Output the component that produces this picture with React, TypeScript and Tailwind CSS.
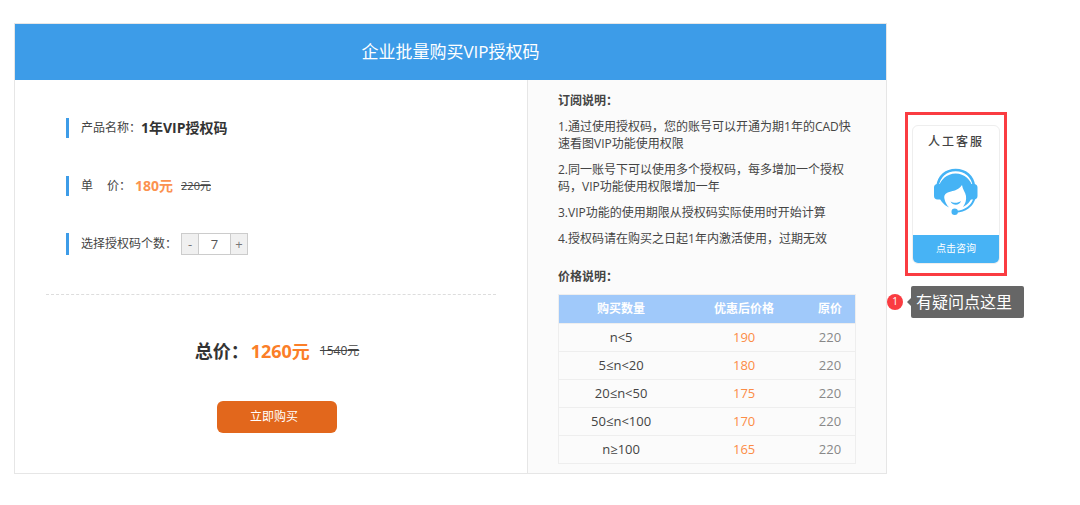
import { useState } from "react";

const tiers = [
  { range: "n<5", price: 190 },
  { range: "5≤n<20", price: 180 },
  { range: "20≤n<50", price: 175 },
  { range: "50≤n<100", price: 170 },
  { range: "n≥100", price: 165 },
];

const notes = [
  "1.通过使用授权码，您的账号可以开通为期1年的CAD快速看图VIP功能使用权限",
  "2.同一账号下可以使用多个授权码，每多增加一个授权码，VIP功能使用权限增加一年",
  "3.VIP功能的使用期限从授权码实际使用时开始计算",
  "4.授权码请在购买之日起1年内激活使用，过期无效",
];

const LIST_PRICE = 220;

function unitPrice(n: number) {
  if (n < 5) return 190;
  if (n < 20) return 180;
  if (n < 50) return 175;
  if (n < 100) return 170;
  return 165;
}

function HeadsetIcon() {
  return (
    <svg viewBox="0 0 46 48" className="h-12 w-[46px]" aria-hidden="true">
      <path d="M4.500 18C6 8 13 2 22.700 2S39.500 8 41 18" fill="none" stroke="#45b3f5" strokeWidth="2.6" />
      <path d="M4.500 16H8v15.500H4.500C2.300 31.500 1 30 1 28v-8.500C1 17.500 2.300 16 4.500 16zM37.500 16H41c2.200 0 3.500 1.500 3.500 3.500V28c0 2-1.300 3.500-3.500 3.500h-3.500z" fill="#45b3f5" />
      <path d="M6 20C6.500 12 14 5.500 22.700 5.500S38.500 12 39.500 20v6c0 5-4 10-9.500 13 2.500-3.500 3.500-7 3-11-.6-4-3.500-6.500-4-11-3 4.500-7 5.500-11 6.500-5 1.300-7.500 3-6.500 7.500.6 3 2 5.800 4.500 8.500C10 36.500 6 31.500 6 26z" fill="#45b3f5" />
      <path d="M17.500 33.500c3 1.800 7.500 1.800 10.500-.5-1.500 4.800-8 5.200-10.500.5z" fill="#45b3f5" />
      <path d="M41.500 30C39.500 38 32 43.500 23 43.800" fill="none" stroke="#45b3f5" strokeWidth="2" />
      <circle cx="21.700" cy="43.800" r="3.200" fill="#45b3f5" />
    </svg>
  );
}

export default function App() {
  const [count, setCount] = useState(7);
  const price = unitPrice(count);

  return (
    <div
      lang="zh-CN"
      className="flex items-start bg-white pt-[23px] pl-3.5 font-['Open_Sans','Noto_Sans_CJK_SC',sans-serif] text-xs text-[#444]"
    >
      <main className="min-w-0 flex-1 border border-[#e6e6e6]">
        <h1 className="bg-[#3d9ce8] text-center text-[17px] leading-[56px] text-white">企业批量购买VIP授权码</h1>
        <div className="flex">
          <section className="min-w-0 flex-1 px-[31px] pt-9">
            <div className="flex flex-col gap-[34px] pl-5">
              <div className="flex h-6 items-center">
                <span className="mr-3 h-5 w-[3px] bg-[#3d9ce8]" />
                <span>产品名称：</span>
                <strong className="text-sm text-[#333]">1年VIP授权码</strong>
              </div>
              <div className="flex h-6 items-center">
                <span className="mr-3 h-5 w-[3px] bg-[#3d9ce8]" />
                <span className="mr-3.5">单</span>
                <span className="mr-1">价：</span>
                <strong className="mr-2 text-sm text-[#fb9250]">{price}元</strong>
                <del className="text-[11px]">{LIST_PRICE}元</del>
              </div>
              <div className="flex h-6 items-center">
                <span className="mr-3 h-[22px] w-[3px] bg-[#3d9ce8]" />
                <label htmlFor="count" className="mr-1">选择授权码个数：</label>
                <div className="flex h-[22px] border border-[#ccc] text-[13px] text-[#777]">
                  <button type="button" aria-label="减少" onClick={() => setCount(Math.max(1, count - 1))} className="w-4 bg-[#f0f0f0] leading-5">-</button>
                  <input
                    id="count"
                    value={count}
                    onChange={(e) => setCount(Math.max(1, Number(e.target.value) || 1))}
                    className="w-[33px] border-x border-[#ccc] bg-white text-center leading-5 text-[#555] outline-none"
                  />
                  <button type="button" aria-label="增加" onClick={() => setCount(count + 1)} className="w-4 bg-[#f0f0f0] leading-5">+</button>
                </div>
              </div>
            </div>
            <div className="mt-[38px] border-t border-dashed border-[#ddd]" />
            <div className="mt-11 flex items-center justify-center pl-3 leading-6">
              <strong className="mr-0.5 text-lg leading-6 text-[#333]">总价：</strong>
              <strong className="mr-2.5 text-lg leading-6 text-[#fb7e28]">{price * count}元</strong>
              <del>{LIST_PRICE * count}元</del>
            </div>
            <div className="mt-[38px] flex justify-center pl-3">
              <button type="button" className="h-8 w-[120px] rounded-md bg-[#e2671c] pr-1.5 text-white">立即购买</button>
            </div>
          </section>

          <section className="w-[359px] border-l border-[#e6e6e6] bg-[#fbfbfb] px-[30px] pt-3 pb-[9px]">
            <h2 className="leading-[17px] font-bold">订阅说明：</h2>
            <div className="mt-[9px] flex flex-col gap-[9px]">
              {notes.map((note) => (
                <p key={note} className="leading-[17px]">{note}</p>
              ))}
            </div>
            <h2 className="mt-[21px] mb-[9px] leading-[17px] font-bold">价格说明：</h2>
            <table className="w-full table-fixed border-collapse border border-[#eee] text-center">
              <thead>
                <tr className="h-[29px] bg-[#a0c9fa] text-white">
                  <th className="w-[42%]">购买数量</th>
                  <th className="w-[41%]">优惠后价格</th>
                  <th className="w-[17%]">原价</th>
                </tr>
              </thead>
              <tbody>
                {tiers.map((tier) => (
                  <tr key={tier.range} className="h-7 border-t border-[#eee] text-[13px]">
                    <td>{tier.range}</td>
                    <td className="text-[#fb8c46]">{tier.price}</td>
                    <td className="text-[#888]">{LIST_PRICE}</td>
                  </tr>
                ))}
              </tbody>
            </table>
          </section>
        </div>
      </main>

      <aside className="w-[193px] pt-[89px]">
        <div className="ml-[18px] w-[102px] border-[3px] border-[#fa3c41] px-1 pt-2.5 pb-[9px]">
          <div className="overflow-hidden rounded-md border border-[#eee] text-center">
            <p className="pt-2 text-xs leading-4 font-medium tracking-[2px]">人工客服</p>
            <div className="mt-[18px] mb-[19px] flex justify-center"><HeadsetIcon /></div>
            <button type="button" className="block h-7 w-full bg-[#47b3f5] text-[10px] text-white">点击咨询</button>
          </div>
        </div>
        <div className="mt-2.5 flex items-center">
          <span className="flex size-4 items-center justify-center rounded-full bg-[#fa3c41] text-[10px] text-white">1</span>
          <span className="ml-1 border-y-4 border-r-4 border-y-transparent border-r-[#666]" />
          <span className="rounded-xs bg-[#666] pr-3 pl-[5px] text-base leading-8 text-white">有疑问点这里</span>
        </div>
      </aside>
    </div>
  );
}
